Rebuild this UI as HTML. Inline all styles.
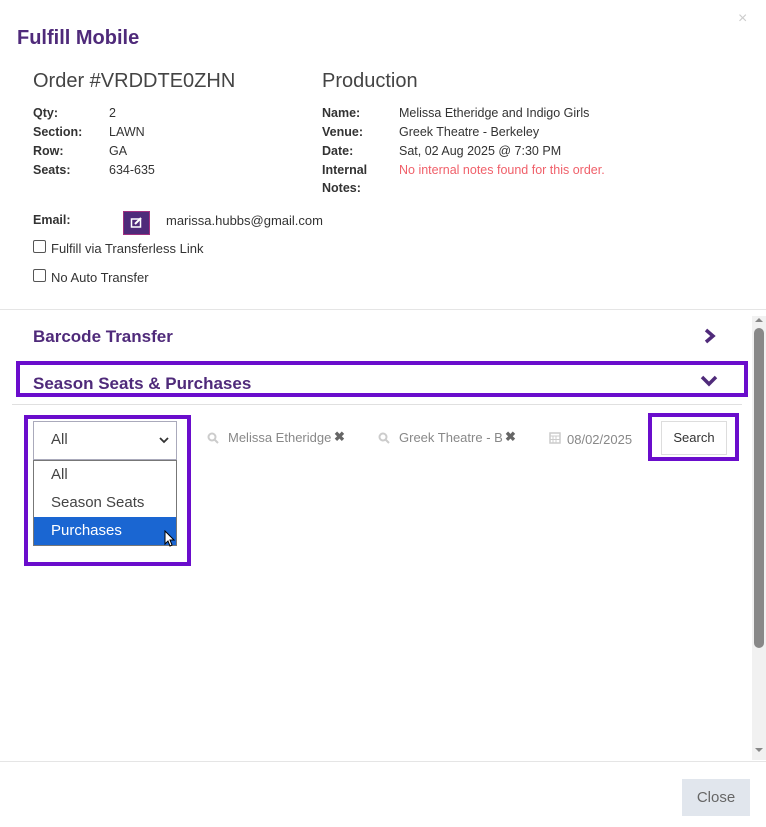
<!DOCTYPE html>
<html><head><meta charset="utf-8"><style>
*{margin:0;padding:0;box-sizing:border-box}
body{width:766px;height:827px;background:#fff;font-family:"Liberation Sans",sans-serif;color:#333;position:relative;overflow:hidden}
.a{position:absolute;white-space:nowrap}
.lb{font-weight:bold;font-size:12.5px;color:#333}
.v{font-size:12.5px;color:#333}
.h{font-size:20px;color:#444}
.pur{color:#4f2a7a;font-weight:bold}
.box{position:absolute;border:4px solid #6a0dcc}
.cb{position:absolute;width:13px;height:13px;border:1px solid #555;border-radius:2px;background:#fff}
.g{color:#888;font-size:13px}
</style></head><body>
<div class="a" style="left:738px;top:10px;color:#ccc;font-size:16px">×</div>
<div class="a pur" style="left:17px;top:27px;font-size:20px">Fulfill Mobile</div>

<div class="a h" style="left:33px;top:70px">Order #VRDDTE0ZHN</div>
<div class="a lb" style="left:33px;top:106px">Qty:</div><div class="a v" style="left:109px;top:106px">2</div>
<div class="a lb" style="left:33px;top:125px">Section:</div><div class="a v" style="left:109px;top:125px">LAWN</div>
<div class="a lb" style="left:33px;top:144px">Row:</div><div class="a v" style="left:109px;top:144px">GA</div>
<div class="a lb" style="left:33px;top:163px">Seats:</div><div class="a v" style="left:109px;top:163px">634-635</div>

<div class="a h" style="left:322px;top:70px">Production</div>
<div class="a lb" style="left:322px;top:106px">Name:</div><div class="a v" style="left:399px;top:106px">Melissa Etheridge and Indigo Girls</div>
<div class="a lb" style="left:322px;top:125px">Venue:</div><div class="a v" style="left:399px;top:125px">Greek Theatre - Berkeley</div>
<div class="a lb" style="left:322px;top:144px">Date:</div><div class="a v" style="left:399px;top:144px">Sat, 02 Aug 2025 @ 7:30 PM</div>
<div class="a lb" style="left:322px;top:163px">Internal</div><div class="a v" style="left:399px;top:163px;color:#f0606a">No internal notes found for this order.</div>
<div class="a lb" style="left:322px;top:181px">Notes:</div>

<div class="a lb" style="left:33px;top:213px">Email:</div>
<div class="a" style="left:123px;top:211px;width:27px;height:24px;background:#4f2a7a;border:1px solid #a03080"><svg width="25" height="22" viewBox="0 0 25 22"><rect x="7.5" y="7" width="9" height="8" fill="none" stroke="#fff" stroke-width="1.5"/><path d="M11 12 L17 6" stroke="#fff" stroke-width="2"/></svg></div>
<div class="a v" style="left:166px;top:213px;font-size:13px">marissa.hubbs@gmail.com</div>
<div class="cb" style="left:33px;top:240px"></div><div class="a v" style="left:51px;top:241px;font-size:13px">Fulfill via Transferless Link</div>
<div class="cb" style="left:33px;top:269px"></div><div class="a v" style="left:51px;top:270px;font-size:13px">No Auto Transfer</div>

<div class="a" style="left:0;top:309px;width:766px;height:1px;background:#e5e5e5"></div>
<div class="a pur" style="left:33px;top:327px;font-size:17px">Barcode Transfer</div>
<svg class="a" style="left:703px;top:328px" width="14" height="16" viewBox="0 0 14 16"><path d="M3 2 L10 8 L3 14" fill="none" stroke="#4f2a7a" stroke-width="3.5"/></svg>
<div class="box" style="left:16px;top:361px;width:732px;height:36px"></div>
<div class="a pur" style="left:33px;top:374px;font-size:17px">Season Seats &amp; Purchases</div>
<svg class="a" style="left:700px;top:374px" width="18" height="14" viewBox="0 0 18 14"><path d="M2 3 L9 10 L16 3" fill="none" stroke="#4f2a7a" stroke-width="3.5"/></svg>
<div class="a" style="left:12px;top:404px;width:490px;height:1px;background:#e0e0e0"></div>
<div class="a" style="left:12px;top:404px;width:730px;height:1px;background:#e0e0e0"></div>

<div class="box" style="left:24px;top:415px;width:167px;height:151px"></div>
<div class="a" style="left:33px;top:421px;width:144px;height:39px;border:1px solid #aab;background:#fff"></div>
<div class="a" style="left:51px;top:431px;font-size:15px;color:#444">All</div>
<svg class="a" style="left:159px;top:436px" width="10" height="8"><path d="M1 2 L5 6 L9 2" fill="none" stroke="#333" stroke-width="1.8"/></svg>
<div class="a" style="left:33px;top:460px;width:144px;height:86px;border:1px solid #777;background:#fff"></div>
<div class="a" style="left:51px;top:466px;font-size:15px;color:#444">All</div>
<div class="a" style="left:51px;top:494px;font-size:15px;color:#444">Season Seats</div>
<div class="a" style="left:34px;top:517px;width:142px;height:28px;background:#1a66d2"></div>
<div class="a" style="left:51px;top:522px;font-size:15px;color:#fff">Purchases</div>
<svg class="a" style="left:164px;top:530px" width="12" height="18" viewBox="0 0 12 18"><path d="M1 1 L1 14 L4 11 L6 16 L8 15 L6 10 L10 10 Z" fill="#fff" stroke="#000" stroke-width="1"/></svg>

<svg class="a" style="left:207px;top:432px" width="12" height="12"><circle cx="5" cy="5" r="3.5" fill="none" stroke="#ccc" stroke-width="2"/><path d="M7.5 7.5 L11 11" stroke="#ccc" stroke-width="2"/></svg>
<div class="a g" style="left:228px;top:430px;width:104px;overflow:hidden">Melissa Etheridge</div>
<div class="a" style="left:334px;top:429px;font-size:13px;color:#666;font-weight:bold">✖</div>
<svg class="a" style="left:378px;top:432px" width="12" height="12"><circle cx="5" cy="5" r="3.5" fill="none" stroke="#ccc" stroke-width="2"/><path d="M7.5 7.5 L11 11" stroke="#ccc" stroke-width="2"/></svg>
<div class="a g" style="left:399px;top:430px;width:104px;overflow:hidden">Greek Theatre - B</div>
<div class="a" style="left:505px;top:429px;font-size:13px;color:#666;font-weight:bold">✖</div>
<svg class="a" style="left:549px;top:431px" width="12" height="13"><rect x="1" y="2" width="10" height="10" fill="none" stroke="#ccc" stroke-width="1.5"/><path d="M1 5 H11 M4 5 V12 M7 5 V12 M1 8.5 H11" stroke="#ccc"/></svg>
<div class="a g" style="left:567px;top:432px">08/02/2025</div>
<div class="box" style="left:648px;top:413px;width:91px;height:48px"></div>
<div class="a" style="left:661px;top:421px;width:66px;height:34px;border:1px solid #ddd;background:#fff;font-size:13px;color:#333;text-align:center;line-height:32px">Search</div>

<div class="a" style="left:752px;top:316px;width:14px;height:444px;background:#f1f1f1"></div>
<div class="a" style="left:754px;top:328px;width:10px;height:320px;background:#888;border-radius:5px"></div>
<svg class="a" style="left:754px;top:316px" width="10" height="8"><path d="M1 6 L5 2 L9 6 Z" fill="#888"/></svg>
<svg class="a" style="left:754px;top:746px" width="10" height="8"><path d="M1 2 L5 6 L9 2 Z" fill="#888"/></svg>
<div class="a" style="left:0;top:761px;width:766px;height:1px;background:#e5e5e5"></div>
<div class="a" style="left:682px;top:779px;width:68px;height:37px;background:#e1e6ed;color:#666;font-size:15px;text-align:center;line-height:37px">Close</div>
</body></html>
